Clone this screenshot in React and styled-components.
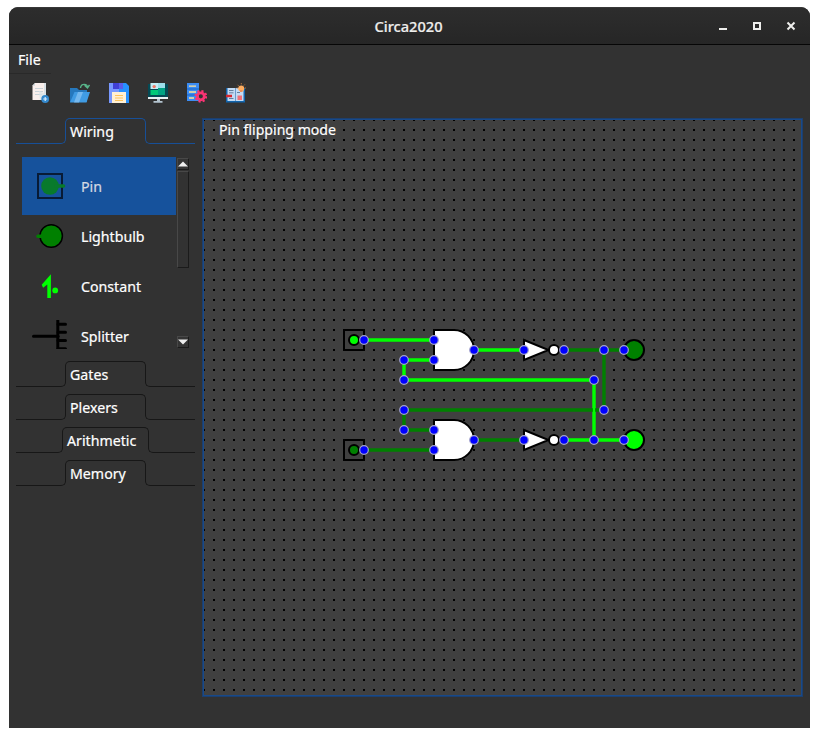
import React from "react";
import styled, { createGlobalStyle } from "styled-components";

const Global = createGlobalStyle`
  * { box-sizing: border-box; }
  body { margin: 0; background: #fff; font-family: "Noto Sans", sans-serif; font-size: 14.2px; color: #fff; overflow: hidden; -webkit-text-stroke: 0.2px currentColor; }
  svg { display: block; }
`;

const Page = styled.div`
  width: 819px;
  height: 737px;
  padding: 7px 9px 9px;
`;
const Window = styled.div`
  width: 801px;
  height: 721px;
  background: #323232;
  border-radius: 9px 9px 0 0;
  overflow: hidden;
  display: flex;
  flex-direction: column;
`;
const TitleBar = styled.header`
  height: 38px;
  flex: none;
  display: grid;
  grid-template-columns: 98px 1fr 98px;
  align-items: center;
  background: linear-gradient(#2d2d2d, #262626);
  border-top: 1px solid #383838;
  border-bottom: 1px solid #060606;
`;
const Title = styled.h1`
  grid-column: 2;
  margin: 0;
  font-size: 14.6px;
  font-weight: 500;
  line-height: 20px;
  text-align: center;
  padding: 0 2px 0 0;
  color: #eeeeec;
`;
const Controls = styled.div`
  display: flex;
  justify-content: space-between;
  padding: 0 14px 0 6px;
`;
const MenuBar = styled.nav`
  flex: none;
  height: 29px;
  width: 42px;
  padding: 5px 0 0 9px;
  line-height: 20px;
  border-bottom: 1px solid #292929;
`;
const Toolbar = styled.div`
  flex: none;
  display: flex;
  gap: 19px;
  height: 44px;
  padding: 9px 22px 0;
`;
const Main = styled.main`
  flex: none;
  display: flex;
  padding-left: 7px;
  gap: 7px;
`;
const Sidebar = styled.aside`
  width: 179px;
  display: flex;
  flex-direction: column;
`;
const Section = styled.section`
  height: ${(p) => (p.$open ? 243 : 33)}px;
`;
const TabRow = styled.div`
  display: flex;
  height: 26px;
  --line: ${(p) => (p.$open ? "#174f97" : "#171717")};
`;
const Flank = styled.span`
  flex: 1;
  height: 6px;
  align-self: flex-end;
  border: 0 solid var(--line);
  border-bottom-width: 1px;
  ${(p) =>
    p.$side === "left"
      ? "border-right-width: 1px; border-bottom-right-radius: 5px; margin-right: -1px;"
      : "border-left-width: 1px; border-bottom-left-radius: 5px; margin-left: -1px;"}
`;
const Tab = styled.button`
  width: ${(p) => p.$width}px;
  height: 21px;
  padding: 3px 0 0 4px;
  background: none;
  border: 1px solid var(--line);
  border-bottom: 0;
  border-radius: 5px 5px 0 0;
  color: #fff;
  font: inherit;
  line-height: 20px;
  text-align: left;
  white-space: nowrap;
`;
const ListArea = styled.div`
  display: flex;
  gap: 1px;
  height: 192px;
  margin: 13px 0 0 6px;
`;
const List = styled.ul`
  list-style: none;
  margin: 0;
  padding: 0;
  width: 154px;
  overflow: hidden;
`;
const Item = styled.li`
  display: flex;
  align-items: center;
  gap: 13px;
  height: ${(p) => (p.$selected ? 58 : 50)}px;
  margin-bottom: ${(p) => (p.$selected ? -4 : 0)}px;
  padding-left: 10px;
  background: ${(p) => (p.$selected ? "#16529c" : "transparent")};
  color: ${(p) => (p.$selected ? "#d5d9e2" : "#fff")};
  line-height: 20px;
  svg { flex: none; }
  span { padding-top: 2px; }
`;
const ScrollBar = styled.div`
  width: 12px;
  display: flex;
  flex-direction: column;
  padding: 1px 0;
`;
const bevel = `
  border: 1px solid #1b1b1b;
  border-top-color: #484848;
  border-left-color: #484848;
`;
const Arrow = styled.button`
  height: 12px;
  width: 12px;
  padding: 0;
  display: grid;
  place-items: center;
  background: #343434;
  ${bevel}
  margin-top: ${(p) => (p.$end ? "auto" : 0)};
`;
const Thumb = styled.div`
  height: 97px;
  margin-top: 1px;
  ${bevel}
`;
const Canvas = styled.section`
  position: relative;
  width: 601px;
  height: 579px;
  border: 1px solid #1d3f6d;
  box-shadow: inset 0 0 0 1px #17498a;
  padding: 1px;
  background: #404040;
`;
const Mode = styled.div`
  position: absolute;
  left: 16px;
  top: 1px;
  line-height: 20px;
  font-size: 14.1px;
`;

const NewIcon = () => (
  <svg width="20" height="20" viewBox="0 0 20 20">
    <path d="M1.5 2.5 4 0h11v17H1.5z" fill="#f9efec" />
    <path d="M13 0h2v17h-2z" fill="#d8e1e6" />
    <path d="M1.5 2.8H4V0z" fill="#cfd8dc" />
    <path d="M4 5.5h8M4 8.5h8M4 11.5h7" stroke="#c9d3d8" />
    <path d="M8 8l7 3v6H9z" fill="#dce5e9" opacity=".8" />
    <circle cx="14.2" cy="16" r="3.9" fill="#3489cd" />
    <path d="M12.2 16h4M14.2 14v4" stroke="#d7ecff" strokeWidth="1.2" />
  </svg>
);
const OpenIcon = () => (
  <svg width="20" height="20" viewBox="0 0 20 20">
    <path d="M0 5h7l2 2h8v12H0z" fill="#2678bd" />
    <path d="M4.5 9H20l-3.5 10.5H0z" fill="#409be3" />
    <path d="m8 9 5 0-4 10.5H4z" fill="#87c1f1" opacity=".75" />
    <path d="M10.5 5c.5-5 7-4.5 7-.5M14.5 2.2l3 2.8 2-3" fill="none" stroke="#58b58a" strokeWidth="1.4" />
  </svg>
);
const SaveIcon = () => (
  <svg width="20" height="20" viewBox="0 0 20 20">
    <path d="M0 0h17l3 3v17H0z" fill="#2691ff" />
    <path d="M0 0h10v20H0z" fill="#7898ff" />
    <path d="M4 0h10v6H4z" fill="#4040d5" />
    <path d="M10 0h4v6h-4z" fill="#5b5ce9" />
    <path d="M3 9h14v11H3z" fill="#fff0d5" />
    <path d="M6 12.5h8M6 15h8M6 17.5h8" stroke="#ffc45b" />
  </svg>
);
const DisplayIcon = () => (
  <svg width="20" height="20" viewBox="0 0 20 20">
    <path d="M0 1h20v14H0z" fill="#044a55" />
    <path d="M2.5 0H17v6H2.5z" fill="#c5edf5" />
    <path d="M10 0h7v5h-7z" fill="#9ddfeb" />
    <circle cx="6.2" cy="3.6" r="1.7" fill="#ed7968" />
    <path d="M2.5 7H10V5h7v7H2.5z" fill="#00c978" />
    <path d="M10 5h7v7h-7z" fill="#00a383" />
    <path d="M0 14h20v2H0z" fill="#e9f2f4" />
    <path d="M9 16h3v2.5H9zM5.5 18h9v1.7h-9z" fill="#b4c4cf" />
  </svg>
);
const ServerIcon = () => (
  <svg width="20" height="20" viewBox="0 0 20 20">
    <path d="M0 0h12v18H0z" fill="#3b8cf4" />
    <path d="M0 6h12M0 12h12" stroke="#1765c4" />
    <path d="M2 3.2h7M2 9h7M2 15h5" stroke="#ffe298" strokeWidth="1.3" />
    <circle cx="13.8" cy="13.3" r="5.4" fill="none" stroke="#fa3474" strokeWidth="2" strokeDasharray="2.12 2.12" />
    <circle cx="13.8" cy="13.3" r="3.5" fill="none" stroke="#fa3474" strokeWidth="2.8" />
  </svg>
);
const BookIcon = () => (
  <svg width="20" height="20" viewBox="0 0 20 20">
    <path d="M0 5h19v14.5H0z" fill="#1165ad" />
    <path d="M1.5 5H9v13H1.5zM10 5h7.5v13H10z" fill="#c4dbf4" />
    <path d="M9 5h1v13H9z" fill="#6c9bcc" />
    <path d="M3 7.5h4.5M3 9.8h4.5M3 15.5h4.5M11 9.5h3" stroke="#65819f" />
    <path d="M0 11.8h6v2.4H0z" fill="#d72831" />
    <path d="M11.5 12.5H16V17h-4.5z" fill="#ef7078" />
    <circle cx="15.2" cy="5.4" r="3" fill="#ffad5f" />
    <path d="M14 7h2.5v2H14z" fill="#eb8d59" />
    <path d="M15.3 0v1.4M11.6 1.8l1 1M18.8 1.5l-1 1M10.6 5h1.2M18.8 5H20" stroke="#b17340" />
  </svg>
);

const PartFrame = styled.svg.attrs({ width: 36, height: 50, viewBox: "0 0 36 50" })``;
const PinPart = () => (
  <PartFrame>
    <rect x="6" y="13" width="24" height="24" fill="none" stroke="#081b36" strokeWidth="2" />
    <circle cx="18" cy="25" r="8.8" fill="#087a2c" />
    <path d="M24 25h7.5" stroke="#087a2c" strokeWidth="3.6" strokeLinecap="round" />
  </PartFrame>
);
const BulbPart = () => (
  <PartFrame>
    <circle cx="19.2" cy="25" r="11.2" fill="#008000" stroke="#000" strokeWidth="1.5" />
    <path d="M6 25.2h4" stroke="#008000" strokeWidth="3.4" strokeLinecap="round" />
  </PartFrame>
);
const ConstantPart = () => (
  <PartFrame>
    <path d="M18.9 13.2V37h-3.6V23.5l-4.2 3.2-1.4-3z" fill="#00ff00" />
    <circle cx="23.2" cy="29.4" r="2.9" fill="#00ff00" />
  </PartFrame>
);
const SplitterPart = () => (
  <PartFrame>
    <path d="M1.5 25.3H26" stroke="#000" strokeWidth="3" strokeLinecap="round" />
    <path d="M25.8 9V38" stroke="#000" strokeWidth="3" />
    <path d="M26 13.3h7.5M26 21.3h7.5M26 29.4h7.5M26 37.8h7.5" stroke="#000" strokeWidth="3" strokeLinecap="round" />
  </PartFrame>
);

const parts = [
  ["Pin", PinPart],
  ["Lightbulb", BulbPart],
  ["Constant", ConstantPart],
  ["Splitter", SplitterPart],
];
const ON = "#00ff00";
const OFF = "#008000";
const wires = [
  [ON, "M364 340H434"],
  [ON, "M434 360H404V380H594V440"],
  [ON, "M474 350H524M564 440H624"],
  [OFF, "M434 430H404V410H604V350"],
  [OFF, "M364 450H434M474 440H524M564 350H624"],
];
const nodes = [
  [364, 340], [434, 340], [434, 360], [404, 360], [404, 380], [594, 380], [594, 440],
  [474, 350], [524, 350], [564, 350], [604, 350], [624, 350], [604, 410], [404, 410],
  [404, 430], [434, 430], [434, 450], [364, 450], [474, 440], [524, 440], [564, 440], [624, 440],
];

const Circuit = () => (
  <svg width="597" height="575" viewBox="204 120 597 575">
    <defs>
      <pattern id="dots" x="203" y="119" width="10" height="10" patternUnits="userSpaceOnUse">
        <rect width="2" height="2" fill="#000" />
      </pattern>
    </defs>
    <rect x="204" y="120" width="597" height="575" fill="url(#dots)" />
    {[[340, ON], [450, OFF]].map(([y, c]) => (
      <g key={y} stroke="#000" strokeWidth="2">
        <rect x="344" y={y - 10} width="20" height="20" fill="none" />
        <circle cx="354" cy={y} r="5" fill={c} />
      </g>
    ))}
    {[[350, OFF], [440, ON]].map(([y, c]) => (
      <g key={y} stroke="#000" strokeWidth="2" fill="#fff">
        <path d={`M434 ${y - 20}h20a20 20 0 0 1 0 40h-20z`} />
        <path d={`M524 ${y - 10}l24.5 10l-24.5 10z`} />
        <circle cx="554" cy={y} r="5" />
        <circle cx="634" cy={y} r="10" fill={c} />
      </g>
    ))}
    {wires.map(([c, d]) => (
      <path key={d} d={d} fill="none" stroke={c} strokeWidth="3.4" />
    ))}
    <path d="M594 400V420" stroke={ON} strokeWidth="2.2" />
    {nodes.map(([x, y]) => (
      <circle key={`${x}-${y}`} cx={x} cy={y} r="4.3" fill="#0000ff" stroke="#a4a4cc" strokeWidth="1.2" />
    ))}
  </svg>
);

const Category = ({ name, width = 81, open, children }) => (
  <Section $open={open}>
    <TabRow $open={open}>
      <Flank $side="left" />
      <Tab $width={width}>{name}</Tab>
      <Flank $side="right" />
    </TabRow>
    {children}
  </Section>
);

export default function App() {
  return (
    <Page>
      <Global />
      <Window>
        <TitleBar>
          <Title>Circa2020</Title>
          <Controls>
            <svg width="10" height="10" viewBox="0 0 10 10"><path d="M1 8h8" stroke="#eeeeec" strokeWidth="2" /></svg>
            <svg width="10" height="10" viewBox="0 0 10 10"><path d="M2 2h6v6H2z" fill="none" stroke="#eeeeec" strokeWidth="2" /></svg>
            <svg width="10" height="10" viewBox="0 0 10 10"><path d="m1.5 1.5 7 7m0-7-7 7" stroke="#eeeeec" strokeWidth="2" /></svg>
          </Controls>
        </TitleBar>
        <MenuBar>File</MenuBar>
        <Toolbar>
          <NewIcon />
          <OpenIcon />
          <SaveIcon />
          <DisplayIcon />
          <ServerIcon />
          <BookIcon />
        </Toolbar>
        <Main>
          <Sidebar>
            <Category name="Wiring" open>
              <ListArea>
                <List>
                  {parts.map(([name, Icon], i) => (
                    <Item key={name} $selected={i === 0}>
                      <Icon />
                      <span>{name}</span>
                    </Item>
                  ))}
                </List>
                <ScrollBar>
                  <Arrow><svg width="10" height="6" viewBox="0 0 10 6"><path d="M0 5.5 5 .5l5 5z" fill="#eee" /></svg></Arrow>
                  <Thumb />
                  <Arrow $end><svg width="10" height="6" viewBox="0 0 10 6"><path d="M0 .5h10l-5 5z" fill="#eee" /></svg></Arrow>
                </ScrollBar>
              </ListArea>
            </Category>
            <Category name="Gates" />
            <Category name="Plexers" />
            <Category name="Arithmetic" width={87} />
            <Category name="Memory" />
          </Sidebar>
          <Canvas>
            <Circuit />
            <Mode>Pin flipping mode</Mode>
          </Canvas>
        </Main>
      </Window>
    </Page>
  );
}
